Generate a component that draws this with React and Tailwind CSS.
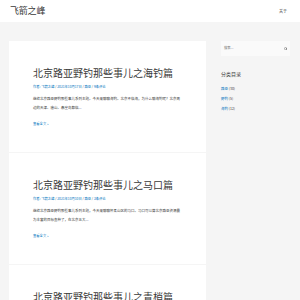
import { Search } from 'lucide-react';

const font = { fontFamily: '"Noto Sans CJK SC", "Noto Sans", sans-serif' };

const posts = [
  {
    title: '北京路亚野钓那些事儿之海钓篇',
    date: '2021年10月17日',
    comments: '9条评论',
    excerpt:
      '继续北京路亚野钓那些事儿系列主题。今天来聊聊海钓。北京不临海，为什么聊海钓呢？北京周边的天津、唐山、秦皇岛都临...',
  },
  {
    title: '北京路亚野钓那些事儿之马口篇',
    date: '2021年10月10日',
    comments: '3条评论',
    excerpt:
      '继续北京路亚野钓那些事儿系列主题，今天来聊聊怀柔山区的马口。马口可以算北京路亚资源最为丰富的目标鱼种了，在北京五大...',
  },
  {
    title: '北京路亚野钓那些事儿之青梢篇',
    date: '2021年10月3日',
    comments: '5条评论',
    excerpt:
      '继续北京路亚野钓那些事儿系列主题，今天来聊聊青梢。青梢是北京水库里最常见的掠食性鱼类之一，在北京各大水库...',
  },
];

const cats = [
  ['路亚', 30],
  ['野钓', 5],
  ['海钓', 12],
];

function Post({ post }) {
  return (
    <article className="bg-white h-[111px] shrink-0 px-[24px] pt-[26.5px]">
      <h2 className="text-[10px] leading-[12px] text-[#3a3a3a] whitespace-nowrap">{post.title}</h2>
      <div className="mt-[4.7px] text-[3.3px] leading-[5px] text-[#3a3a3a] whitespace-nowrap">
        <span className="text-[#0274be]">作者: </span>
        <span className="text-[#0274be]"> 飞箭之峰</span>
        <span> / </span>
        <span className="text-[#0274be]">{post.date}</span>
        <span> / </span>
        <span className="text-[#0274be]">路亚</span>
        <span> / </span>
        <span className="text-[#0274be]">{post.comments}</span>
      </div>
      <p className="mt-[5.3px] text-[3.5px] leading-[9px] text-[#3a3a3a] w-[148px]">{post.excerpt}</p>
      <div className="mt-[8.7px] text-[3.3px] leading-[5px] text-[#0274be]">查看全文 »</div>
    </article>
  );
}

export default function App() {
  return (
    <div className="w-[300px] h-[300px] overflow-hidden bg-[#f5f5f5]" style={font}>
      <header className="h-[22px] bg-white flex items-center justify-between pl-[10px] pr-[13px]">
        <div className="text-[9px] leading-[10px] text-[#3a3a3a] tracking-[-0.2px]">飞箭之峰</div>
        <div className="text-[4px] leading-[5px] text-[#3a3a3a]">关于</div>
      </header>
      <main className="flex pl-[9px] pt-[18.7px]">
        <div className="w-[197px] flex flex-col gap-[1px] shrink-0">
          {posts.map((p) => (
            <Post key={p.title} post={p} />
          ))}
        </div>
        <aside className="ml-[15px] w-[69px] shrink-0 pt-[0.3px]">
          <div className="h-[15px] bg-[#fafafa] flex items-center justify-between px-[3px]">
            <span className="text-[3.3px] text-[#6b6b6b]">搜索...</span>
            <Search className="w-[3.5px] h-[3.5px] text-[#555]" strokeWidth={3} />
          </div>
          <h3 className="mt-[14px] text-[5px] leading-[7px] text-[#3a3a3a]">分类目录</h3>
          <ul className="mt-[9px] flex flex-col gap-[5px]">
            {cats.map(([name, n]) => (
              <li key={name} className="text-[3.5px] leading-[5px] text-[#3a3a3a]">
                <span className="text-[#0274be]">{name}</span> ({n})
              </li>
            ))}
          </ul>
        </aside>
      </main>
    </div>
  );
}
